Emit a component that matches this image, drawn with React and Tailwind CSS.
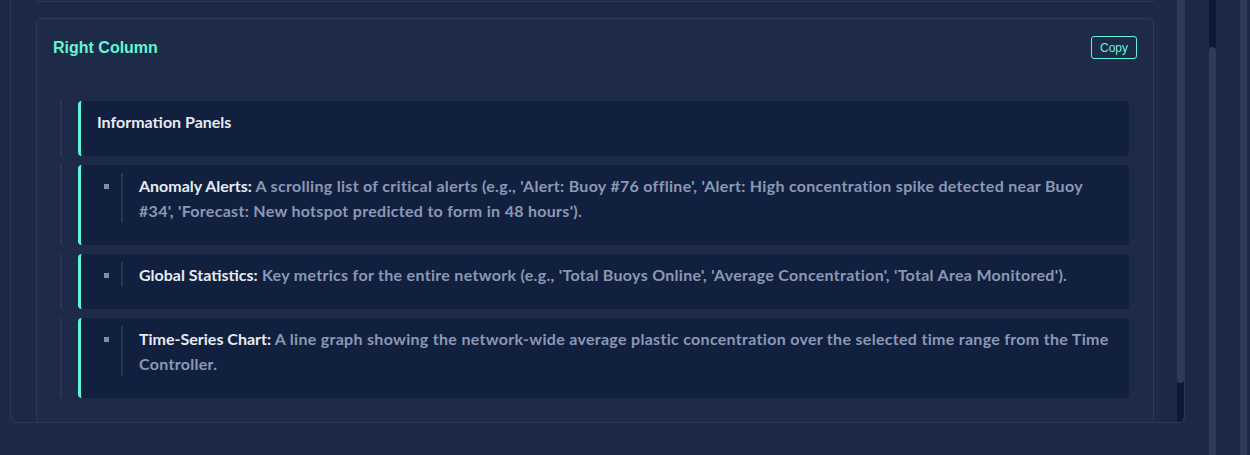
import React from "react";

const items = [
  {
    label: "Anomaly Alerts:",
    text: " A scrolling list of critical alerts (e.g., 'Alert: Buoy #76 offline', 'Alert: High concentration spike detected near Buoy #34', 'Forecast: New hotspot predicted to form in 48 hours').",
  },
  {
    label: "Global Statistics:",
    text: " Key metrics for the entire network (e.g., 'Total Buoys Online', 'Average Concentration', 'Total Area Monitored').",
  },
  {
    label: "Time-Series Chart:",
    text: " A line graph showing the network-wide average plastic concentration over the selected time range from the Time Controller.",
  },
];

function Row({ children }) {
  return (
    <div className="flex border-l-2 border-[#2a3651] pl-4">
      <div className="flex-1 rounded-[4px] border-l-[3px] border-[#60f5d4] bg-[#12203f] pl-4 pr-4 pt-2 pb-[22px] text-[16px] leading-[25px] font-bold">
        {children}
      </div>
    </div>
  );
}

export default function App() {
  return (
    <div
      className="flex w-[1250px] h-[455px] overflow-hidden bg-[#1d2a47]"
      style={{ fontFamily: "Lato, 'Noto Sans', sans-serif" }}
    >
      {/* main scroll container */}
      <div className="ml-[10px] flex h-[423px] w-[1175px] overflow-hidden rounded-b-[7px] border-x border-b border-[#2d3a57]">
        <div className="flex-1 overflow-hidden pl-[25px] pr-[23px]">
          {/* previous card bottom */}
          <div className="h-[2px] rounded-b-[6px] border-x border-b border-[#2d3a57]" />
          {/* Right Column card */}
          <div className="mt-4 h-[500px] rounded-[6px] border border-[#2d3a57] bg-[#1e2b48]">
            <div className="flex items-center justify-between px-4 pt-[17px]">
              <h3
                className="text-[16px] font-bold leading-[23px] text-[#62f7d2]"
                style={{ fontFamily: "'Liberation Sans', Arial, sans-serif" }}
              >
                Right Column
              </h3>
              <button
                className="flex h-[23px] items-center rounded-[3px] border border-[#60f5d4] px-2 text-[12px] text-[#62f7d2]"
                style={{ fontFamily: "'Liberation Sans', Arial, sans-serif" }}
              >
                Copy
              </button>
            </div>
            <div className="flex flex-col gap-[9px] pl-[23px] pr-6 pt-[42px]">
              <Row>
                <div className="text-[#e6eaf2]">Information Panels</div>
              </Row>
              {items.map((it) => (
                <Row key={it.label}>
                  <div className="flex items-start">
                    <span className="ml-[7px] mr-[12px] mt-[11px] h-[5px] w-[5px] shrink-0 bg-[#7f8ca8]" />
                    <div className="border-l-2 border-[#2a3651] pl-4">
                      <span className="text-[#e6eaf2]">{it.label}</span>
                      <span className="tracking-[0.3px] text-[#8b98b4]">{it.text}</span>
                    </div>
                  </div>
                </Row>
              ))}
            </div>
          </div>
        </div>
        {/* inner scrollbar */}
        <div className="flex w-[7px] flex-col overflow-hidden bg-[#0e1a33]">
          <div className="h-[383px] rounded-b-[4px] bg-[#2f3a56]" />
        </div>
      </div>
      {/* outer scrollbars */}
      <div className="ml-[24px] flex h-full w-[7px] flex-col bg-[#0e1a33]">
        <div className="mt-[47px] flex-1 rounded-t-[4px] bg-[#2f3a56]" />
      </div>
      <div className="ml-[24px] h-full w-[7px] bg-[#2f3a56]" />
    </div>
  );
}
